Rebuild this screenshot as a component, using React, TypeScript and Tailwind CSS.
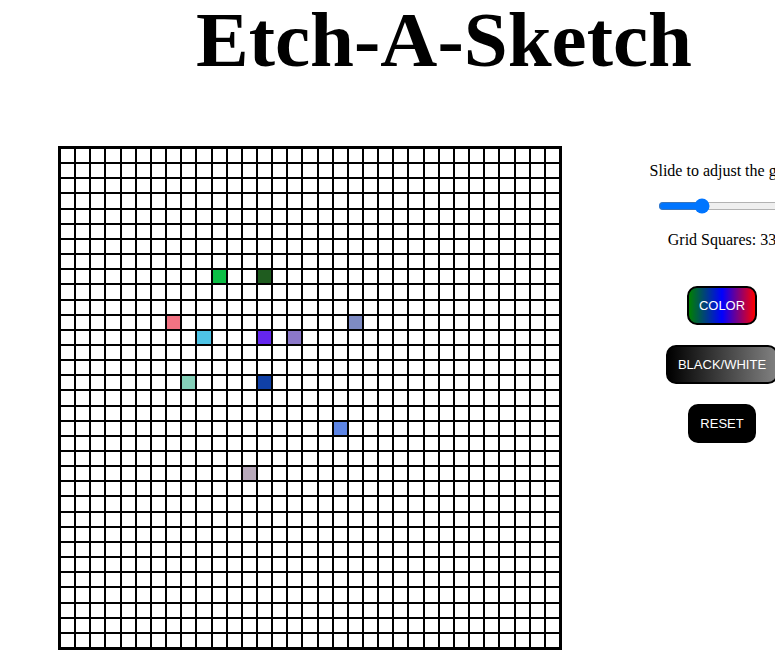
import React from "react";

const SIZE = 33;
const painted: Record<string, string> = {
  "8-10": "#0cbf46",
  "8-13": "#1f5c1f",
  "11-7": "#f27383",
  "11-19": "#7e8bc3",
  "12-9": "#4ec4e6",
  "12-13": "#6526ee",
  "12-15": "#8b78c9",
  "15-8": "#84d0b9",
  "15-13": "#1040a6",
  "18-18": "#5c84e4",
  "21-12": "#b7a8ba",
};

export default function App() {
  const cells = [];
  for (let r = 0; r < SIZE; r++) {
    for (let c = 0; c < SIZE; c++) {
      const color = painted[`${r}-${c}`];
      cells.push(
        <div
          key={`${r}-${c}`}
          className="border border-black bg-white"
          style={color ? { backgroundColor: color } : undefined}
        />
      );
    }
  }

  return (
    <div className="w-[775px] h-[652px] overflow-hidden bg-white">
      <div className="w-[888px] font-['Liberation_Serif',serif] text-black">
        <h1 className="text-center text-[79px] leading-[80px] font-bold m-0">Etch-A-Sketch</h1>
        <div className="flex flex-row items-start mt-[66px]">
          <div className="ml-[58px] w-[504px] h-[504px] border-2 border-black grid grid-cols-[repeat(33,minmax(0,1fr))] grid-rows-[repeat(33,minmax(0,1fr))]">
            {cells}
          </div>
          <div className="ml-[60px] w-[200px] flex flex-col items-center pt-[16px]">
            <p className="text-[16px] leading-[18px] whitespace-nowrap">Slide to adjust the grid</p>
            <input
              type="range"
              min={1}
              max={100}
              defaultValue={33}
              className="mt-[18px] mx-[2px] mb-[2px] w-[129px]"
            />
            <p className="mt-[15px] text-[16px] leading-[18px] whitespace-nowrap">Grid Squares: 33</p>
            <button className="mt-[37px] px-[10px] py-[10px] border-2 border-black rounded-[10px] text-white text-[13px] leading-[15px] font-['Liberation_Sans',Arial,sans-serif] bg-[linear-gradient(to_right,green,blue,red)]">
              COLOR
            </button>
            <button className="mt-[20px] px-[10px] py-[10px] border-2 border-black rounded-[10px] text-white text-[13px] leading-[15px] font-['Liberation_Sans',Arial,sans-serif] bg-[linear-gradient(to_right,black,gray)]">
              BLACK/WHITE
            </button>
            <button className="mt-[20px] px-[10px] py-[10px] border-2 border-black rounded-[10px] text-white text-[13px] leading-[15px] font-['Liberation_Sans',Arial,sans-serif] bg-black">
              RESET
            </button>
          </div>
        </div>
      </div>
    </div>
  );
}
